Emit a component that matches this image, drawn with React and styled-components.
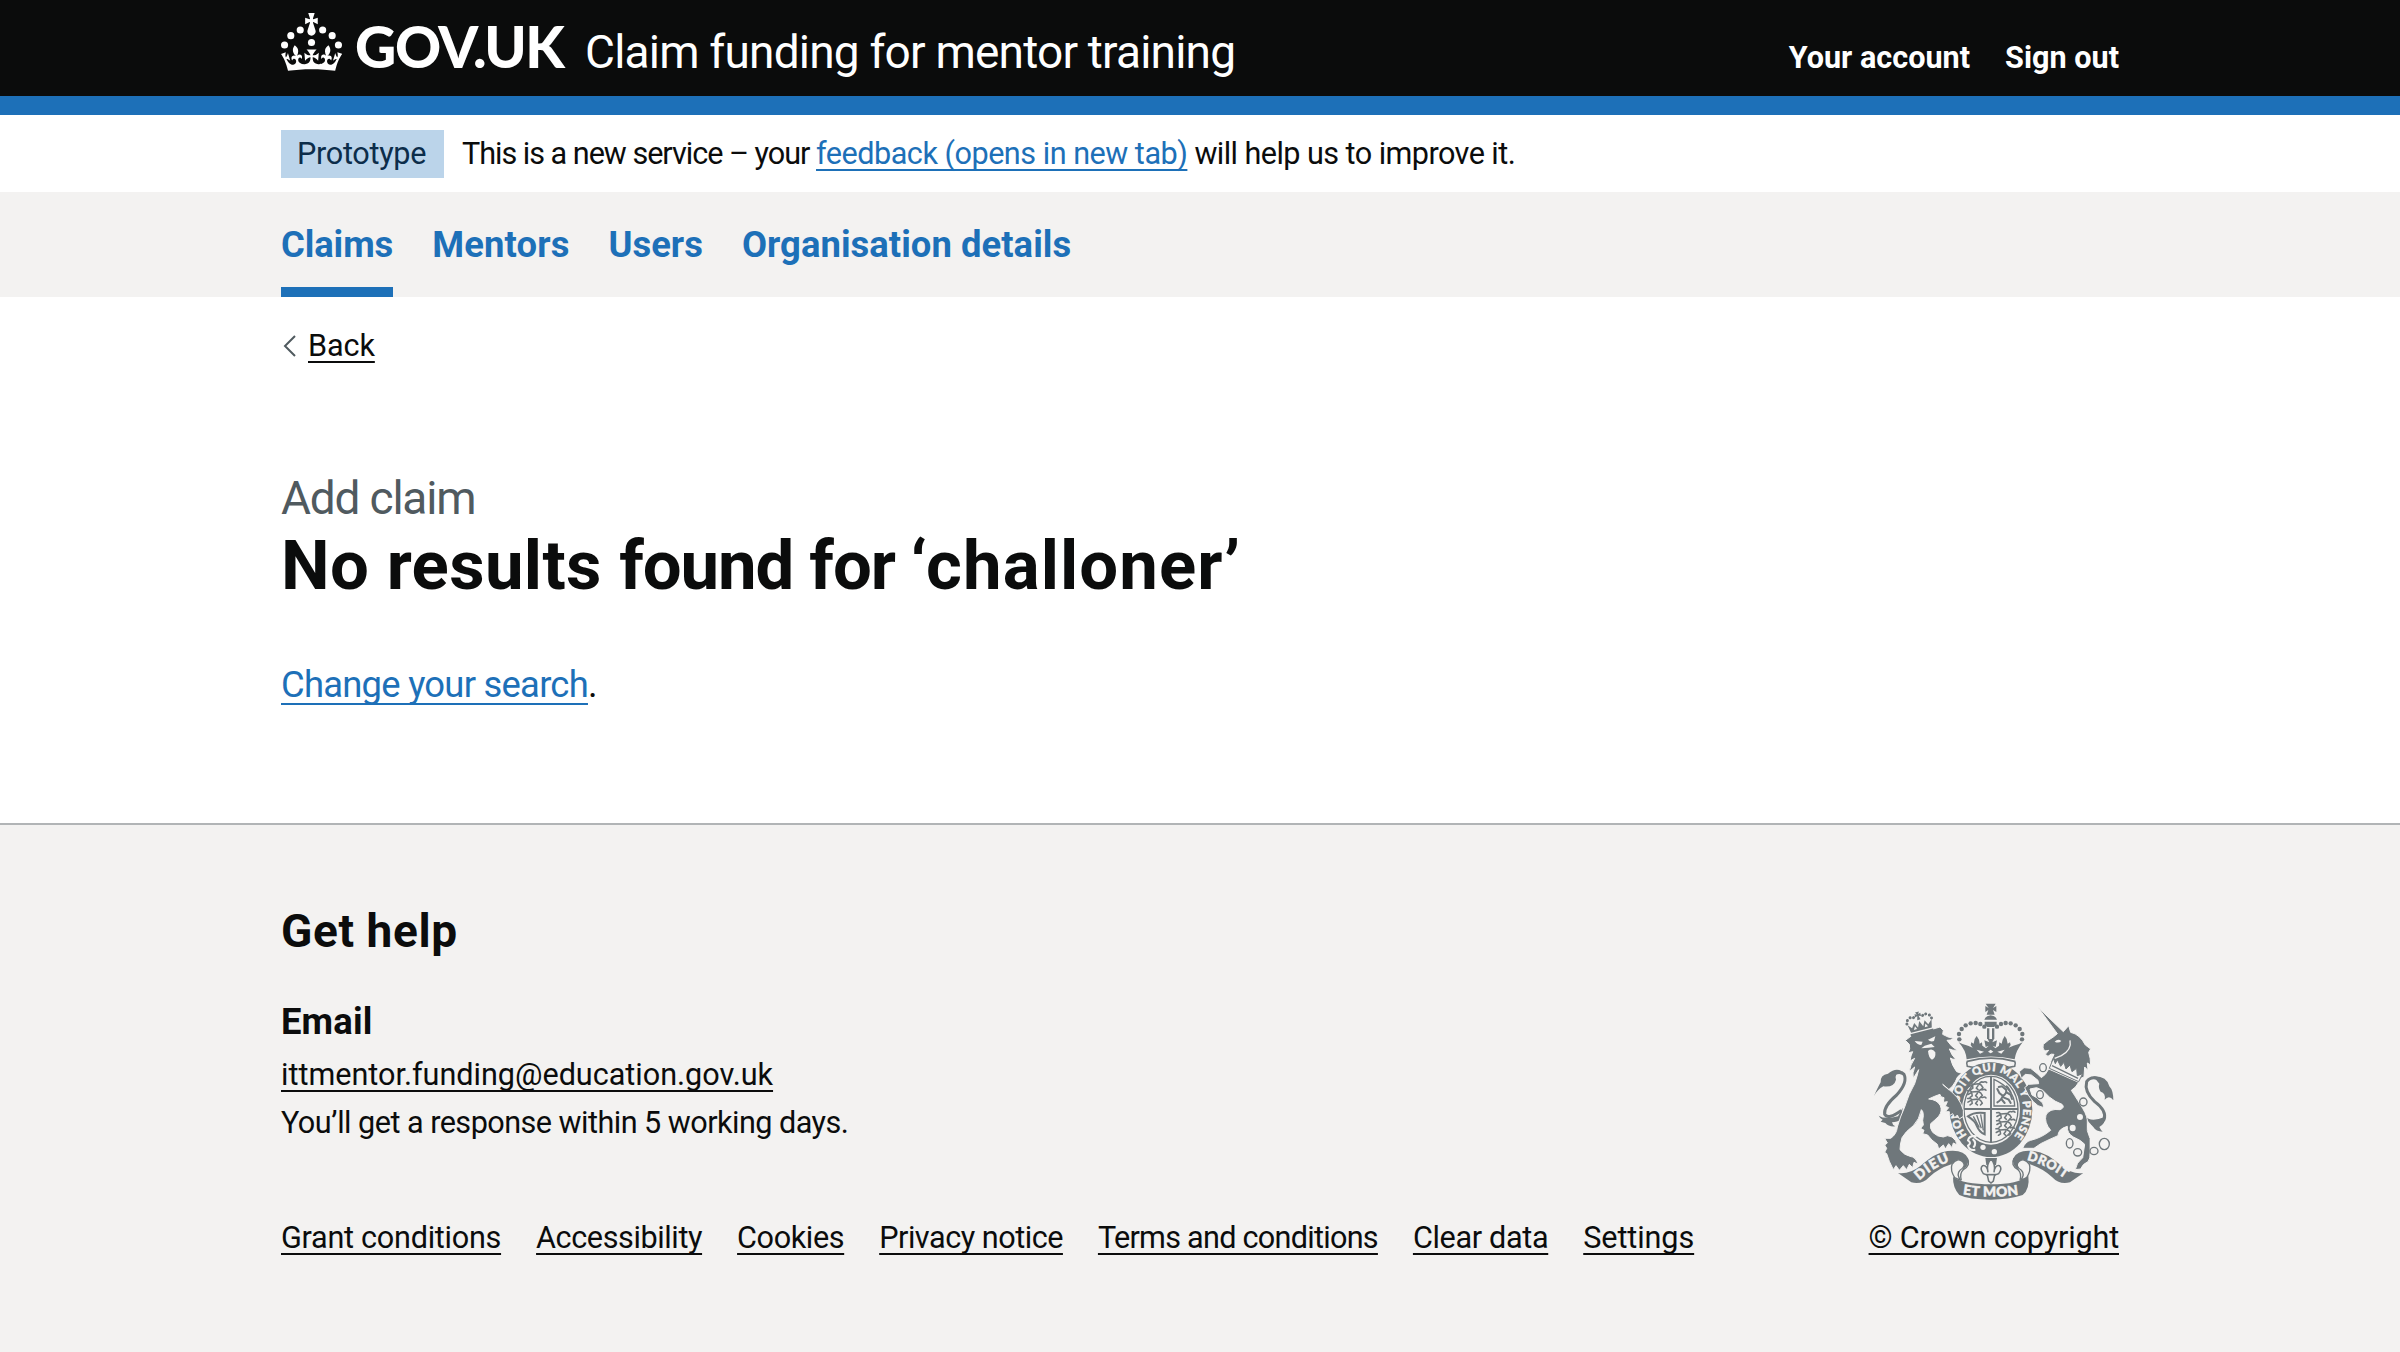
import React from "react";
import styled, { createGlobalStyle } from "styled-components";

const ink = "#0b0c0c";
const blue = "#1d70b8";
const pale = "#f3f2f1";
const grey = "#6f777b";

const GlobalStyle = createGlobalStyle`
  *, *::before, *::after { box-sizing: border-box; }
  html, body { margin: 0; background: ${pale}; }
  body { font-family: Roboto, "Liberation Sans", sans-serif; color: ${ink}; font-size: 30.6px; }
  h1, h2, h3, p, ul { margin: 0; padding: 0; font-weight: 400; list-style: none; }
`;

const Page = styled.div`min-height: 1352px; background: #fff; display: flex; flex-direction: column;`;
const Container = styled.div`width: 1838px; margin: 0 auto;`;

const Header = styled.header`height: 115px; background: ${ink}; border-bottom: 19px solid ${blue}; color: #fff;`;
const HeaderRow = styled(Container)`display: flex; align-items: flex-start; justify-content: space-between;`;
const Brand = styled.div`display: flex; align-items: flex-start;`;
const Crown = styled.svg`width: 61px; height: 58px; margin: 13px 13px 0 0; fill: #fff;`;
const Wordmark = styled.span`
  font: 900 57px/57px Lato, sans-serif; letter-spacing: -1.4px; margin-top: 18px; width: 230px; white-space: nowrap;
`;
const ServiceName = styled.span`font-size: 46px; line-height: 46px; letter-spacing: -0.8px; margin-top: 29px; white-space: nowrap;`;
const AccountNav = styled.nav`display: flex; gap: 35px; margin-top: 39px; line-height: 38px; font-weight: 700;`;
const AccountLink = styled.a`color: #fff; letter-spacing: ${(p) => p.$track}px;`;

const PhaseBanner = styled(Container)`height: 77px; display: flex; align-items: center; gap: 18px; padding-top: 1px;`;
const Tag = styled.strong`
  background: #bbd4ea; color: #0c2d4a; font-weight: 400; height: 48px; line-height: 47px; width: 163px;
  padding-left: 16px; letter-spacing: -0.3px;
`;
const PhaseText = styled.p`line-height: 48px; white-space: nowrap;`;
const Tracked = styled.span`letter-spacing: ${(p) => p.$track}px;`;

const Link = styled.a`
  color: ${(p) => (p.$plain ? ink : blue)}; letter-spacing: ${(p) => p.$track || 0}px;
  text-decoration: underline; text-decoration-thickness: 2px; text-underline-offset: 0.1578em;
  text-decoration-skip-ink: none; white-space: nowrap;
`;

const PrimaryNav = styled.nav`background: ${pale}; height: 105px;`;
const Tabs = styled(Container)`display: flex; gap: 39px; height: 105px;`;
const Tab = styled.a`
  color: ${blue}; font-weight: 700; font-size: 36.4px; line-height: 105px; height: 105px; white-space: nowrap;
  letter-spacing: ${(p) => p.$track}px;
  box-shadow: ${(p) => (p.$current ? `inset 0 -10px 0 ${blue}` : "none")};
`;

const Main = styled(Container)`padding: 30px 0 114px;`;
const Back = styled.div`display: flex; align-items: center; line-height: 38px;`;
const Chevron = styled.svg`width: 16px; height: 24px; margin-right: 11px; fill: none; stroke: #505a5f; stroke-width: 2;`;
const Caption = styled.span`display: block; margin-top: 109px; font-size: 46px; line-height: 48px; color: #505a5f; letter-spacing: -1.2px;`;
const Title = styled.h1`margin-top: 6px; font-size: 68.9px; line-height: 76px; font-weight: 700;`;
const Body = styled.p`margin-top: 57px; font-size: 36.4px; line-height: 48px;`;

const Footer = styled.footer`flex: 1; background: ${pale}; border-top: 2px solid #b1b4b6; padding-top: 82px;`;
const FooterRow = styled(Container)`display: flex; align-items: flex-end; justify-content: space-between;`;
const FooterTitle = styled.h2`font-size: 46px; line-height: 48px; font-weight: 700; letter-spacing: 0.6px;`;
const FooterHeading = styled.h3`margin: 43px 0 5px; font-size: 36.4px; line-height: 48px; font-weight: 700; letter-spacing: 0.15px;`;
const FooterText = styled.p`line-height: 48.3px; letter-spacing: ${(p) => p.$track || 0}px;`;
const FooterLinks = styled.ul`display: flex; gap: 35px; margin-top: 66px; line-height: 48px;`;
const Copyright = styled.div`display: flex; flex-direction: column; align-items: flex-end; line-height: 48px;`;
const Arms = styled.svg`width: 240px; height: 196.67px; margin: 0 5px 14px 0; fill: ${grey}; display: block;`;

const links = [
  ["Grant conditions", -0.27], ["Accessibility", -0.4], ["Cookies", -0.38], ["Privacy notice", -0.48],
  ["Terms and conditions", -0.73], ["Clear data", -0.34], ["Settings", -0.1],
];

const arches = [[-94, 147], [-95, 131], [-87, 116], [-75, 105], [-60, 99], [-45, 98], [-31, 101], [-19, 109]];
const lionMarks = [[323, 285], [321, 308], [321, 331], [408, 374], [408, 398], [406, 422]];
const rings = [[549, 232, 10, 12], [540, 313, 10, 12], [670, 335, 11, 12], [629, 459, 10, 14], [653, 486, 12, 11], [702, 482, 12, 11], [733, 461, 15, 17]];

function SmallLion({ x, y }) {
  return (
    <g transform={`translate(${x} ${y}) scale(0.92)`} stroke={grey} strokeWidth="5" fill="none" strokeLinecap="round" strokeLinejoin="round">
      <path d="M2 -7 L10 -8 L16 -3 L34 -5 L44 -1 L50 8 L44 14 M34 1 L28 9 L34 14 M16 2 L17 9 L10 14 M12 0 L3 5 M38 -5 Q44 -14 50 -10 Q58 -14 62 -9" />
    </g>
  );
}

function RoyalArms() {
  return (
    <Arms viewBox="42 38 720 590">
      <defs>
        <path id="garter" d="M321 435 A97 115 0 1 1 444 455" />
        <path id="dieu" d="M178 571 Q222 528 286 508" />
        <path id="mon" d="M308 612 Q393 626 478 612" />
        <path id="droit" d="M500 509 Q562 524 622 570" />
      </defs>
      {/* crown */}
      <path d="M377 40 L407 40 L399 53 L409 47 L409 65 L399 59 L404 73 L380 73 L385 59 L376 65 L376 47 L386 53 Z" />
      <path d="M373 88 Q375 78 392 75 Q409 78 411 88 Z M374 94 H410 V103 L402 110 H382 L374 103 Z" />
      <path d="M381 114 H388 V146 H381 Z M396 114 H403 V146 H396 Z" />
      {arches.map(([x, y]) => (
        <g key={y * 1000 + x}>
          <circle cx={392 + x} cy={y} r="6.6" />
          <circle cx={392 - x} cy={y} r="6.6" />
        </g>
      ))}
      <path d="M296 156 Q310 164 324 166 L338 172 L332 164 L334 156 L341 160 L344 146 L350 137 L357 148 L359 160 L366 156 L367 166 L378 174 L386 166 L377 170 L373 150 L388 156 L383 146 H402 L397 156 L411 150 L407 170 L398 166 L406 174 L417 166 L418 156 L425 160 L428 148 L434 137 L440 146 L443 160 L450 156 L452 164 L446 172 L460 166 Q474 164 488 156 Q468 180 464 207 Q393 190 320 207 Q318 180 296 156 Z" />
      <path d="M350 178 L372 184 L360 190 Z M434 178 L412 184 L424 190 Z M392 178 L400 184 L392 189 L384 184 Z" fill={pale} />
      <path d="M322 213 Q393 194 464 213 Q468 219 464 228 L446 231 Q393 208 340 231 L322 228 Q318 219 322 213 Z" fill={pale} stroke={grey} strokeWidth="5" />

      {/* lion tail */}
      <path d="M92 257 Q118 238 132 252 Q144 276 110 314 Q70 348 74 372 Q84 390 124 360" fill="none" stroke={grey} strokeWidth="9" />
      <path d="M42 317 Q54 290 62 276 Q60 254 84 250 Q106 232 124 242 Q102 250 108 268 Q102 292 70 288 Q52 298 42 317 Z" />
      <path d="M56 376 Q74 388 114 378 L128 352 L124 386 Q112 396 96 396 Q98 406 106 408 Q86 410 76 398 L62 394 L68 388 Q60 384 56 376 Z" />

      {/* garter */}
      <ellipse cx="393" cy="358" rx="124" ry="142" />
      <ellipse cx="393" cy="358" rx="87" ry="105" fill={pale} />
      <ellipse cx="393" cy="357" rx="81" ry="99" fill="none" stroke={grey} strokeWidth="4" />
      <text fill={pale} stroke={pale} strokeWidth="1.2" fontFamily="Lato, sans-serif" fontWeight="900" fontSize="33">
        <textPath href="#garter" textLength="502">HONI SOIT QUI MAL Y PENSE</textPath>
      </text>
      <path d="M393 257 V457 M312 356 H474" stroke={grey} strokeWidth="6" />
      {lionMarks.map(([x, y]) => <SmallLion key={`${x}-${y}`} x={x} y={y} />)}
      <path d="M402 267 V347 H464 Q464 296 402 267 Z" fill="none" stroke={grey} strokeWidth="4" />
      <path d="M412 336 Q426 328 428 316 L418 308 L412 296 M428 318 Q442 308 438 298 L426 288 L416 290 M440 306 L452 314 L456 326 M432 322 L446 328 L452 338 M424 326 L434 338 M452 306 Q444 290 440 288" fill="none" stroke={grey} strokeWidth="6" strokeLinecap="round" />
      <path d="M324 378 Q342 364 374 368 V432 Q358 426 350 406 Q346 392 324 378 Z" fill="none" stroke={grey} strokeWidth="6" />
      <path d="M340 378 L358 412 M350 374 L364 414 M362 372 L370 420" stroke={grey} strokeWidth="4" />
      <path d="M350 438 Q328 434 324 450 Q336 458 324 466 Q328 482 346 478 M338 446 Q352 458 340 472" fill="none" stroke={pale} strokeWidth="6" />
      <circle cx="369" cy="471" r="8" fill={pale} />
      <circle cx="403" cy="484" r="8" fill={pale} />

      {/* lion */}
      <path stroke={pale} strokeWidth="3" d="M136 150 L158 134 L240 110 L250 120 L248 132 Q264 142 281 144 Q272 151 261 150 Q272 168 292 180 Q278 181 268 176 Q274 194 288 208 Q276 207 271 203 Q276 226 290 244 L305 249 Q290 258 286 274 Q278 290 266 298 L248 282 Q278 306 292 322 Q304 338 310 360 L310 378 L298 386 L292 374 L284 382 L278 370 L268 376 L268 364 L256 364 L266 352 L256 348 L262 334 L250 336 L252 322 Q240 322 240 312 Q222 318 206 326 Q232 328 241 346 Q248 362 236 378 Q222 392 212 400 Q208 412 218 426 Q232 440 250 440 Q262 432 276 440 Q288 448 292 464 L280 458 L276 472 L266 460 L256 476 L250 464 L236 476 L232 462 Q214 450 203 434 L188 430 L192 420 L182 414 L190 404 Q186 390 190 376 Q190 362 184 358 Q178 388 160 406 Q136 424 126 442 Q120 462 120 478 Q132 494 150 498 Q168 500 174 522 L162 516 L158 532 L148 522 L140 538 L130 526 L118 540 L108 526 L100 538 Q86 512 80 490 L74 486 L80 474 L74 464 L82 458 L74 444 L92 444 Q110 432 112 410 Q120 380 134 350 Q146 310 164 280 Q172 256 176 238 L160 264 Q156 248 164 230 L148 244 Q150 224 164 204 L150 212 Q152 196 158 184 L144 188 Q152 176 148 162 Z" />
      <path d="M164 152 L188 154 L184 164 Q172 164 164 152 Z M204 148 L226 138 L222 152 Q212 156 204 148 Z M184 174 L194 166 L214 160 L224 170 L206 172 Z M204 182 Q216 172 226 186 Q228 204 216 208 Q206 204 204 182 Z" fill={pale} />
      <g transform="rotate(-14 180 110)">
        <path d="M147 132 H217 V124 H147 Z M145 96 L156 108 L166 94 L174 110 L182 92 L190 110 L198 94 L206 108 L219 96 L214 120 H150 Z M176 64 H188 L184 71 L191 69 V79 L184 76 L187 88 H177 L180 76 L173 79 V69 L180 71 Z" />
        {[[144, 92], [148, 82], [158, 76], [168, 78], [196, 78], [206, 76], [216, 82], [220, 92]].map(([x, y]) => <circle key={x} cx={x} cy={y} r="4.5" />)}
        <path d="M160 114 L166 104 L170 114 Z M194 114 L198 104 L204 114 Z" fill={pale} />
      </g>

      {/* unicorn tail */}
      <path d="M728 272 Q696 252 680 274 Q672 304 704 334 Q742 362 732 388 Q720 406 694 398" fill="none" stroke={grey} strokeWidth="9" />
      <path d="M700 258 Q740 256 748 288 Q760 300 760 330 Q748 312 734 328 Q738 308 722 304 Q714 292 718 280 Z M676 376 Q690 398 734 380 Q738 398 718 410 Q724 422 728 424 Q708 424 700 410 Q684 396 676 376 Z" />

      {/* unicorn */}
      <path stroke={pale} strokeWidth="3" d="M566 236 L656 276 Q648 292 634 300 Q656 334 668 354 Q684 380 682 398 Q678 420 690 444 L690 488 Q692 504 684 514 Q668 520 662 536 L646 538 Q648 518 668 502 L674 462 Q664 450 640 440 Q620 428 622 408 Q594 416 594 436 Q566 448 542 460 L522 474 L488 474 Q496 454 512 450 Q546 442 572 420 Q552 396 558 374 Q568 354 600 358 Q616 352 606 342 Q584 334 568 320 L548 300 L530 292 L510 296 L516 314 L530 322 L548 338 L552 352 L534 346 L520 334 L506 316 L494 292 L506 282 L536 280 L534 270 L514 254 L496 252 L484 264 L478 244 L492 232 L512 234 L532 250 L544 262 L556 252 Z" />
      <path stroke={pale} strokeWidth="3" d="M534 51 L610 124 L626 106 L632 126 Q660 132 676 164 L692 176 L686 186 Q692 204 692 224 L682 218 L684 240 L674 230 L672 260 L662 264 L572 214 L582 192 Q574 188 564 198 L556 192 L566 180 L554 182 Q546 174 550 162 Q566 148 580 140 L592 130 Z" />
      <path d="M584 154 Q594 144 604 152 Q596 160 584 154 Z" fill={pale} />
      <path d="M630 150 Q636 178 604 196 L584 204" fill="none" stroke={pale} strokeWidth="4" />
      <path d="M580 204 L586 220 L592 208 L602 228 L612 216 L618 236 L630 224 L636 244 L650 234 L652 256 L668 250 L656 274 L568 234 Z" fill={pale} stroke={grey} strokeWidth="3" />
      <path d="M576 226 L654 264" stroke={grey} strokeWidth="4" />
      {rings.map(([x, y, rx, ry]) => <ellipse key={x} cx={x} cy={y} rx={rx} ry={ry} fill={pale} stroke={grey} strokeWidth="4" />)}
      <circle cx="660" cy="380" r="9" fill={pale} />
      <ellipse cx="638" cy="413" rx="9" ry="10" fill={pale} />
      <path d="M676 440 L688 444 V490 L674 504 Z" />

      {/* motto ribbon */}
      <path d="M114 548 Q150 552 180 528 Q226 486 262 482 Q312 476 324 504 Q330 524 306 540 Q318 520 304 512 Q290 504 274 522 Q236 534 208 560 Q186 584 154 576 Z" />
      <path d="M670 548 Q634 552 606 528 Q560 486 522 482 Q472 476 460 504 Q454 524 478 540 Q466 520 480 512 Q494 504 510 522 Q548 534 576 560 Q598 584 630 576 Z" />
      <path d="M276 522 Q292 500 308 514 Q320 526 300 540 Q288 552 302 570 L284 562 Q270 540 276 522 Z M508 522 Q492 500 476 514 Q464 526 484 540 Q496 552 482 570 L500 562 Q514 540 508 522 Z" fill={pale} stroke={grey} strokeWidth="4" />
      <path d="M322 504 Q334 524 310 538 Q298 548 304 570 M462 504 Q450 524 474 538 Q486 548 480 570" fill="none" stroke={grey} strokeWidth="4" />
      <path d="M279 560 Q310 582 393 582 Q474 582 505 556 Q510 596 488 614 Q446 628 393 628 Q326 628 298 614 Q278 592 279 560 Z" />
      <g fill={pale} stroke={pale} strokeWidth="1.5" fontFamily="Lato, sans-serif" fontWeight="900" fontSize="41">
        <text><textPath href="#dieu" textLength="108">DIEU</textPath></text>
        <text><textPath href="#mon" textLength="168">ET MON</textPath></text>
        <text fontSize="39"><textPath href="#droit" textLength="128">DROIT</textPath></text>
      </g>

      {/* fleur-de-lis */}
      <path d="M376 503 H411 L408 524 H379 Z" />
      <path d="M393 506 Q408 522 402 546 Q404 524 418 526 Q428 534 416 550 L404 554 L400 572 L393 578 L386 572 L382 554 L370 550 Q358 534 368 526 Q382 524 384 546 Q378 522 393 506 Z" fill={pale} stroke={grey} strokeWidth="4.5" />
      <path d="M378 553 H408" stroke={grey} strokeWidth="5" />
    </Arms>
  );
}

export default function App() {
  return (
    <Page>
      <GlobalStyle />
      <Header>
        <HeaderRow>
          <Brand>
            <Crown viewBox="0 0 63.4 60.2">
              <circle cx="20" cy="17.6" r="3.7" />
              <circle cx="10.2" cy="23.5" r="3.7" />
              <circle cx="3.7" cy="33.2" r="3.7" />
              <circle cx="31.7" cy="30.6" r="3.7" />
              <circle cx="43.3" cy="17.6" r="3.7" />
              <circle cx="53.2" cy="23.5" r="3.7" />
              <circle cx="59.7" cy="33.2" r="3.7" />
              <path d="M33.1,9.8c.2-.1.3-.3.5-.5l4.6,2.4v-6.8l-4.6,1.5c-.1-.2-.3-.3-.5-.5l1.9-5.9h-6.7l1.9,5.9c-.2.1-.3.3-.5.5l-4.6-1.5v6.8l4.6-2.4c.1.2.3.3.5.5l-2.6,8c-.9,2.8,1.2,5.7,4.1,5.7h0c3,0,5.1-2.9,4.1-5.7l-2.6-8ZM37,37.9s-3.4,3.8-4.1,6.1c2.2,0,4.2-.5,6.4-2.8l-.7,8.5c-2-2.8-4.4-4.1-5.7-3.8.1,3.1.5,6.7,5.8,7.2,3.7.3,6.7-1.5,7-3.8.4-2.6-2-4.3-3.7-1.6-1.4-4.5,2.4-6.1,4.9-3.2-1.9-4.5-1.8-7.7,2.4-10.9,3,4,2.6,7.3-1.2,11.1,2.4-1.3,6.2,0,4,4.6-1.2-2.8-3.7-2.2-4.2.2-.3,1.7.7,3.7,3,4.2,1.9.3,4.7-.9,7-5.9-1.3,0-2.4.7-3.9,1.7l2.4-8c.6,2.3,1.4,3.7,2.2,4.5.6-1.6.5-2.8,0-5.3l5,1.8c-2.6,3.6-5.2,8.7-7.3,17.5-7.4-1.1-15.7-1.7-24.5-1.7h0c-8.8,0-17.1.6-24.5,1.7-2.1-8.9-4.7-13.9-7.3-17.5l5-1.8c-.5,2.5-.6,3.7,0,5.3.8-.8,1.6-2.3,2.2-4.5l2.4,8c-1.5-1-2.6-1.7-3.9-1.7,2.3,5,5.2,6.2,7,5.9,2.3-.4,3.3-2.4,3-4.2-.5-2.4-3-3.1-4.2-.2-2.2-4.6,1.6-6,4-4.6-3.7-3.7-4.2-7.1-1.2-11.1,4.2,3.2,4.3,6.4,2.4,10.9,2.5-2.8,6.3-1.3,4.9,3.2-1.8-2.7-4.1-1-3.7,1.6.3,2.3,3.3,4.1,7,3.8,5.4-.5,5.7-4.2,5.8-7.2-1.3-.2-3.7,1-5.7,3.8l-.7-8.5c2.2,2.3,4.2,2.7,6.4,2.8-.7-2.3-4.1-6.1-4.1-6.1h10.6,0Z" />
            </Crown>
            <Wordmark>GOV.UK</Wordmark>
            <ServiceName>Claim funding for mentor training</ServiceName>
          </Brand>
          <AccountNav>
            <AccountLink $track={0}>Your account</AccountLink>
            <AccountLink $track={0}>Sign out</AccountLink>
          </AccountNav>
        </HeaderRow>
      </Header>

      <PhaseBanner>
        <Tag>Prototype</Tag>
        <PhaseText>
          <Tracked $track={-1.02}>This is a new service – your </Tracked>
          <Link $track={-0.49}>feedback (opens in new tab)</Link>
          <Tracked $track={-0.56}> will help us to improve it.</Tracked>
        </PhaseText>
      </PhaseBanner>

      <PrimaryNav>
        <Tabs>
          <Tab $current $track={-0.1}>Claims</Tab>
          <Tab $track={0.15}>Mentors</Tab>
          <Tab $track={0}>Users</Tab>
          <Tab $track={0.05}>Organisation details</Tab>
        </Tabs>
      </PrimaryNav>

      <Main as="main">
        <Back>
          <Chevron viewBox="0 0 16 24"><path d="M14 2 L4 12 L14 22" /></Chevron>
          <Link $plain $track={-0.1}>Back</Link>
        </Back>
        <Caption>Add claim</Caption>
        <Title>
          <Tracked $track={0.35}>No results </Tracked>
          <Tracked $track={-1.1}>found for </Tracked>
          <Tracked $track={1.1}>‘challoner’</Tracked>
        </Title>
        <Body><Link $track={-0.75}>Change your search</Link>.</Body>
      </Main>

      <Footer>
        <FooterRow>
          <div>
            <FooterTitle>Get help</FooterTitle>
            <FooterHeading>Email</FooterHeading>
            <FooterText><Link $plain $track={-0.02}>ittmentor.funding@education.gov.uk</Link></FooterText>
            <FooterText $track={-0.53}>You’ll get a response within 5 working days.</FooterText>
            <FooterLinks>
              {links.map(([label, track]) => <li key={label}><Link $plain $track={track}>{label}</Link></li>)}
            </FooterLinks>
          </div>
          <Copyright>
            <RoyalArms />
            <Link $plain $track={-0.17}>© Crown copyright</Link>
          </Copyright>
        </FooterRow>
      </Footer>
    </Page>
  );
}
